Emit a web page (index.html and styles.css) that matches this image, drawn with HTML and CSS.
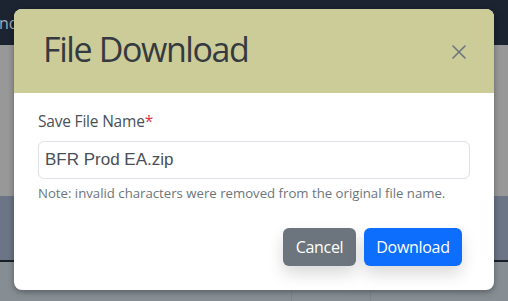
FILE: index.html
```html
<!DOCTYPE html>
<html lang="en">
<head>
<meta charset="utf-8">
<title>File Download</title>
<link rel="stylesheet" href="styles.css">
</head>
<body>
<div class="page">
  <nav class="topnav"><span class="brand">nd</span></nav>
  <div class="band band-grey"></div>
  <div class="band band-slate"></div>
  <div class="band band-rule"></div>
  <div class="band band-low">
    <span class="col-line col-a"></span>
    <span class="col-line col-b"></span>
  </div>
</div>

<div class="modal" role="dialog" aria-labelledby="dlgTitle">
  <div class="modal-header">
    <h1 class="modal-title" id="dlgTitle">File Download</h1>
    <button class="btn-close" type="button" aria-label="Close">
      <svg width="14" height="14" viewBox="0 0 14 14" aria-hidden="true">
        <path d="M1 1 L13 13 M13 1 L1 13" stroke="currentColor" stroke-width="1.6" stroke-linecap="round" fill="none"/>
      </svg>
    </button>
  </div>
  <div class="modal-body">
    <label class="form-label" for="fname">Save File Name<span class="req">*</span></label>
    <input class="form-control" id="fname" type="text" value="BFR Prod EA.zip">
    <div class="form-text">Note: invalid characters were removed from the original file name.</div>
  </div>
  <div class="modal-footer">
    <button class="btn btn-secondary" type="button">Cancel</button>
    <button class="btn btn-primary" type="button">Download</button>
  </div>
</div>
</body>
</html>
```

FILE: styles.css
```css
* { box-sizing: border-box; }

html, body {
  margin: 0;
  padding: 0;
  width: 508px;
  height: 301px;
  overflow: hidden;
}

body {
  font-family: "Open Sans", "Noto Sans", "DejaVu Sans", sans-serif;
  position: relative;
}

.page {
  display: flex;
  flex-direction: column;
  height: 301px;
}

.topnav {
  height: 45px;
  background: #1c2331;
  display: flex;
  align-items: center;
  padding-left: 0;
}

.brand {
  color: #a3abbb;
  font-size: 16px;
  line-height: 1;
  margin-left: -1px;
}

.band { width: 100%; }
.band-grey { height: 151px; background: #989898; }
.band-slate { height: 64px; background: #6b7585; }
.band-rule { height: 2px; background: #1a1f27; }
.band-low {
  flex: 1;
  background: #868e94;
  position: relative;
}

.col-line {
  position: absolute;
  top: 0;
  bottom: 0;
  width: 1px;
  background: #7d858b;
}
.col-a { left: 291px; }
.col-b { left: 370px; }

/* modal */
.modal {
  position: absolute;
  left: 14px;
  top: 9px;
  width: 480px;
  background: #fff;
  border-radius: 8px;
  overflow: hidden;
  box-shadow: 0 2px 6px rgba(0, 0, 0, 0.35);
}

.modal-header {
  height: 84px;
  background: #cccc99;
  display: flex;
  align-items: center;
  justify-content: space-between;
  padding: 0 25px 0 29px;
}

.modal-title {
  margin: -3px 0 0;
  font-size: 34px;
  font-weight: 500;
  line-height: 1.2;
  color: #343a40;
  letter-spacing: -1.4px;
}

.btn-close {
  border: 0;
  background: transparent;
  padding: 0;
  width: 20px;
  height: 20px;
  display: flex;
  align-items: center;
  justify-content: center;
  color: #6c757d;
  margin-top: 2px;
}

.modal-body {
  padding: 16px 24px 0;
  display: flex;
  flex-direction: column;
}

.form-label {
  font-size: 15.5px;
  line-height: 24px;
  color: #495057;
  margin-bottom: 8px;
  letter-spacing: -0.2px;
}

.req { color: #dc3545; }

.form-control {
  height: 38px;
  width: 100%;
  border: 1px solid #dee2e6;
  border-radius: 6px;
  padding: 0 6px;
  font-family: "Liberation Sans", Arial, sans-serif;
  font-size: 17px;
  color: #495057;
  background: #fff;
  outline: none;
}

.form-text {
  margin-top: 4px;
  font-size: 13.2px;
  line-height: 21px;
  color: #6c757d;
}

.modal-footer {
  display: flex;
  justify-content: flex-end;
  gap: 8px;
  padding: 24px 32px 24px 24px;
}

.btn {
  height: 38px;
  border: 1px solid transparent;
  border-radius: 6px;
  padding: 0;
  font-family: "Open Sans", "Noto Sans", sans-serif;
  font-size: 16px;
  letter-spacing: -0.3px;
  color: #fff;
  box-shadow: 0 8px 16px rgba(0, 0, 0, 0.15);
}

.btn-secondary { background: #6c757d; width: 73px; }
.btn-primary { background: #0d6efd; width: 98px; }
```
